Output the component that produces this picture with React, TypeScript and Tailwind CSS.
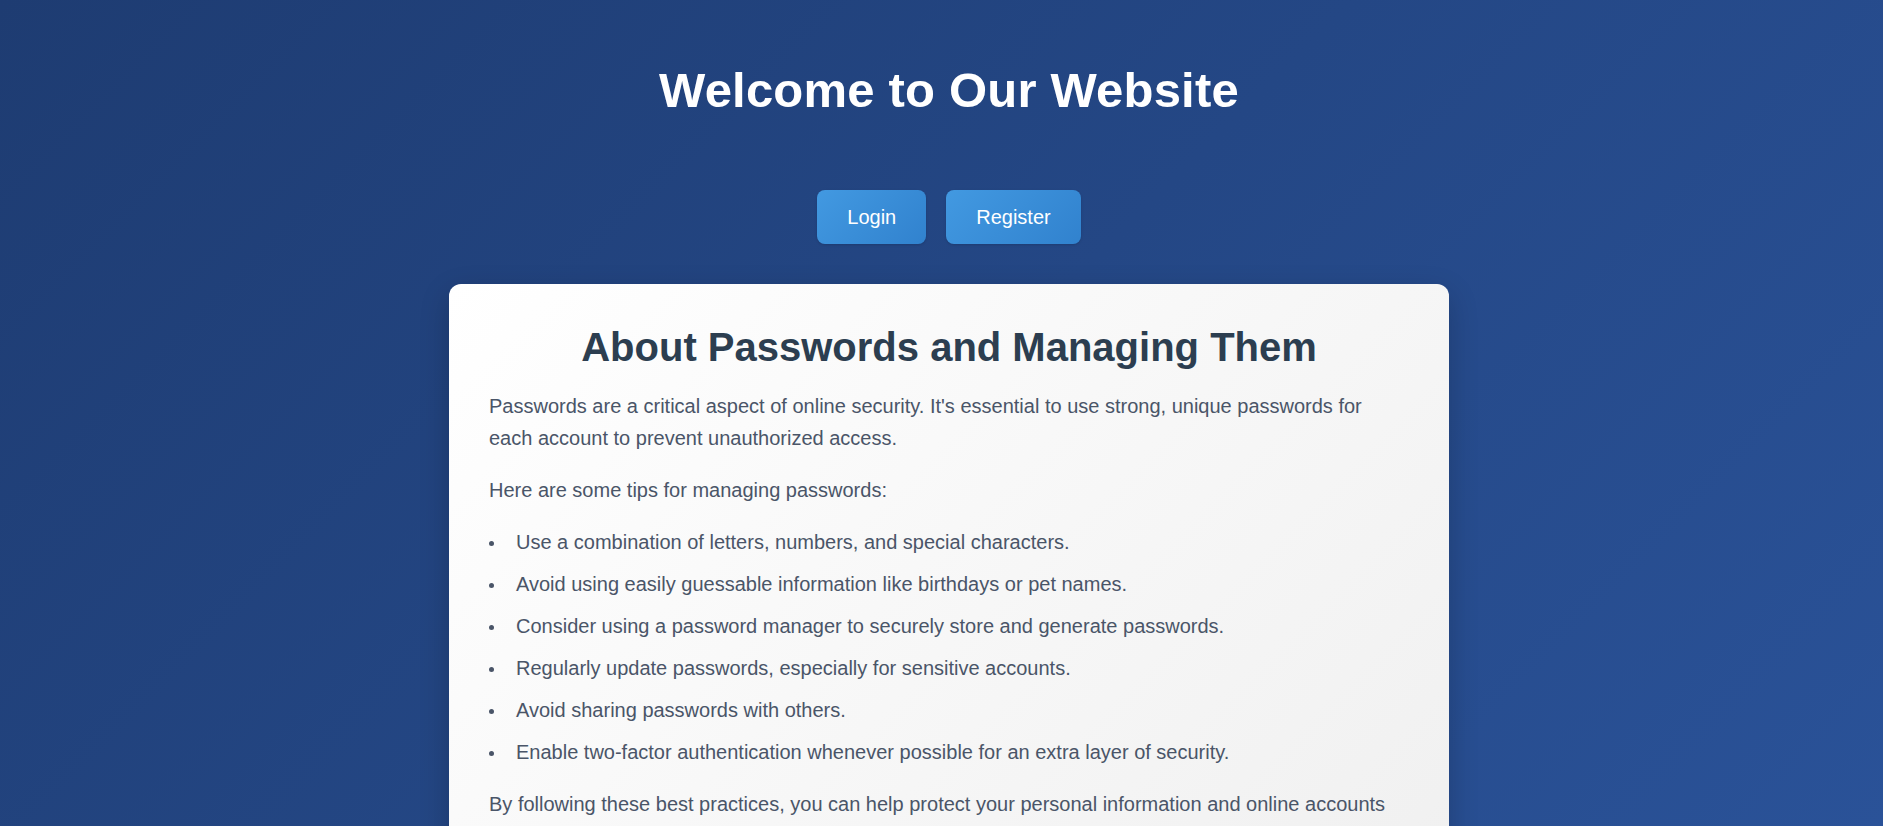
const tips = [
  'Use a combination of letters, numbers, and special characters.',
  'Avoid using easily guessable information like birthdays or pet names.',
  'Consider using a password manager to securely store and generate passwords.',
  'Regularly update passwords, especially for sensitive accounts.',
  'Avoid sharing passwords with others.',
  'Enable two-factor authentication whenever possible for an extra layer of security.',
]

export default function App() {
  return (
    <div
      className="min-h-screen bg-[linear-gradient(135deg,#1e3c72,#2a5298)] bg-fixed pl-[15px] pt-[64px] text-center"
      style={{ fontFamily: '"Liberation Sans", Arial, sans-serif' }}
    >
      {/* Header */}
      <h1 className="text-[49px] font-bold leading-[1.1] tracking-[0.2px] text-white">Welcome to Our Website</h1>

      {/* Auth buttons */}
      <div className="mt-[72px] flex justify-center gap-[20px]">
        <button className="rounded-lg bg-[linear-gradient(135deg,#4299e1,#3182ce)] px-[30px] py-[15px] text-[20px] leading-[24px] text-white shadow-sm">
          Login
        </button>
        <button className="rounded-lg bg-[linear-gradient(135deg,#4299e1,#3182ce)] px-[30px] py-[15px] text-[20px] leading-[24px] text-white shadow-sm">
          Register
        </button>
      </div>

      {/* Info card */}
      <div className="mx-auto mt-[40px] w-[1000px] rounded-xl bg-[linear-gradient(135deg,#ffffff,#f0f0f0)] px-[40px] pt-[40px] pb-[40px] text-left shadow-[0_10px_30px_rgba(0,0,0,0.2)]">
        <h2 className="mb-[20px] text-center text-[40px] font-bold leading-[1.15] text-[#2c3e50]">
          About Passwords and Managing Them
        </h2>
        <div className="text-[20px] leading-[1.6] text-[#4a5568]">
          <p className="mb-[20px]">
            Passwords are a critical aspect of online security. It's essential to use strong, unique passwords
            for each account to prevent unauthorized access.
          </p>
          <p className="mb-[20px]">Here are some tips for managing passwords:</p>
          <ul className="mb-[20px]">
            {tips.map((tip) => (
              <li key={tip} className="mb-[10px] flex">
                <span className="mt-[15px] mr-[22px] h-[5px] w-[5px] shrink-0 rounded-full bg-[#4a5568]" />
                <span>{tip}</span>
              </li>
            ))}
          </ul>
          <p>
            By following these best practices, you can help protect your personal information and online accounts
            from unauthorized access and potential security threats.
          </p>
        </div>
      </div>
    </div>
  )
}
